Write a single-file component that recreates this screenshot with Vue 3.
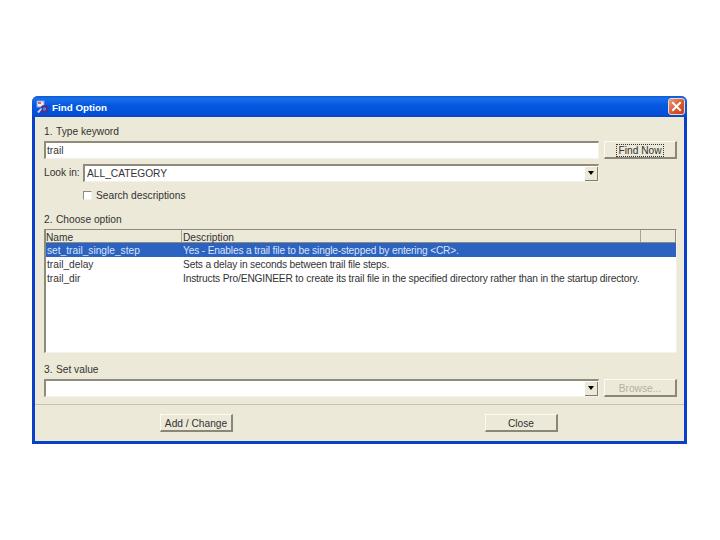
<script setup>
const rows = [
  { name: 'set_trail_single_step', desc: 'Yes - Enables a trail file to be single-stepped by entering <CR>.', selected: true },
  { name: 'trail_delay', desc: 'Sets a delay in seconds between trail file steps.', selected: false },
  { name: 'trail_dir', desc: 'Instructs Pro/ENGINEER to create its trail file in the specified directory rather than in the startup directory.', selected: false }
]
</script>

<template>
  <div class="page">
    <div class="window">
      <div class="titlebar">
        <svg class="app-icon" width="14" height="14" viewBox="0 0 14 14">
          <rect x="1" y="1" width="7" height="6" fill="#e8eef8" stroke="#8aa0d0" stroke-width="1" />
          <rect x="2" y="2" width="3" height="2" fill="#d06080" />
          <circle cx="8.5" cy="9" r="4" fill="#5a2a90" />
          <circle cx="8.5" cy="9" r="1.8" fill="#2f9ac8" />
          <path d="M1 12 L5 8 L6 9 L3 13 Z" fill="#c8d8f0" />
        </svg>
        <span class="title">Find Option</span>
        <div class="close-x">
          <svg width="11" height="11" viewBox="0 0 11 11">
            <path d="M2 2 L9 9 M9 2 L2 9" stroke="#fff" stroke-width="2" stroke-linecap="square" />
          </svg>
        </div>
      </div>
      <div class="client">
        <div class="label first"><span class="num">1.</span>Type keyword</div>
        <div class="row keyword-row">
          <div class="field grow"><span class="pad">trail</span></div>
          <button class="btn side"><span class="focus-box">Find Now</span></button>
        </div>
        <div class="row look-row">
          <span class="look-label">Look in:</span>
          <div class="field combo look-combo">
            <span class="pad">ALL_CATEGORY</span>
            <span class="arrow"><i></i></span>
          </div>
        </div>
        <div class="check-row">
          <span class="check"></span>
          <span>Search descriptions</span>
        </div>
        <div class="label second"><span class="num">2.</span>Choose option</div>
        <div class="list">
          <div class="list-head">
            <span class="col-name head-cell">Name</span>
            <span class="col-desc head-cell">Description</span>
            <span class="col-tail head-cell"></span>
          </div>
          <div v-for="r in rows" :key="r.name" class="list-row" :class="{ selected: r.selected }">
            <span class="col-name cell">{{ r.name }}</span>
            <span class="cell-desc">{{ r.desc }}</span>
          </div>
        </div>
        <div class="label third"><span class="num">3.</span>Set value</div>
        <div class="row value-row">
          <div class="field combo grow">
            <span class="pad"></span>
            <span class="arrow"><i></i></span>
          </div>
          <button class="btn side disabled">Browse...</button>
        </div>
      </div>
      <div class="footer">
        <button class="btn foot">Add / Change</button>
        <button class="btn foot">Close</button>
      </div>
    </div>
  </div>
</template>

<style scoped>
.page {
  width: 720px;
  height: 540px;
  background: #fff;
  padding: 96px 0 0 32px;
  box-sizing: border-box;
  font-family: "Liberation Sans", Arial, sans-serif;
  font-size: 10.2px;
  color: #333;
}
.window {
  width: 655px;
  height: 348px;
  box-sizing: border-box;
  background: #ece9d8;
  border: solid #0a3fc8;
  border-width: 0 3px 3px;
  border-radius: 6px 6px 0 0;
  display: flex;
  flex-direction: column;
}
.titlebar {
  height: 21px;
  margin: 0 -3px;
  flex: none;
  border-radius: 6px 6px 0 0;
  background: linear-gradient(#0a5ad8 0, #1a6ee8 12%, #0558e0 45%, #0450d8 85%, #0a46c0 100%);
  display: flex;
  align-items: center;
  padding: 0 2px 0 4px;
}
.app-icon { flex: none; }
.title {
  margin-left: 2px;
  padding-top: 2px;
  color: #fff;
  font-weight: bold;
  font-size: 9.8px;
}
.close-x {
  margin-left: auto;
  width: 15px;
  height: 15px;
  border: 1px solid #f0d8d0;
  border-radius: 3px;
  background: linear-gradient(135deg, #e8a080, #d8582c 55%, #c84018);
  display: flex;
  align-items: center;
  justify-content: center;
}
.client {
  flex: 1;
  min-height: 0;
  padding: 0 7px 0 9px;
  display: flex;
  flex-direction: column;
}
.label { height: 13px; line-height: 13px; }
.num { display: inline-block; width: 12px; }
.first { margin-top: 8px; }
.second { margin-top: 11px; }
.third { margin-top: 10px; }
.row { display: flex; align-items: flex-start; }
.keyword-row { margin-top: 3px; gap: 5px; }
.look-row { margin-top: 5px; }
.value-row { margin-top: 3px; gap: 5px; }
.grow { flex: 1; }
.field {
  height: 18px;
  box-sizing: border-box;
  background: #fff;
  border-top: 2px solid #8e8b7c;
  border-left: 2px solid #8e8b7c;
  border-right: 1px solid #f4f2e8;
  border-bottom: 1px solid #f4f2e8;
  display: flex;
  align-items: center;
}
.pad { padding-left: 1px; line-height: 14px; }
.look-label { width: 39px; line-height: 18px; }
.look-combo { width: 516px; padding-left: 1px; }
.combo { justify-content: space-between; }
.arrow {
  width: 13px;
  height: 14px;
  background: #ece9d8;
  border-right: 1px solid #807c6c;
  border-bottom: 1px solid #807c6c;
  box-sizing: border-box;
  display: flex;
  align-items: center;
  justify-content: center;
}
.arrow i {
  width: 0;
  height: 0;
  border: 3px solid transparent;
  border-top: 4px solid #000;
  border-bottom: 0;
}
.btn {
  font: inherit;
  color: #333;
  background: #ece9d8;
  border-top: 1px solid #fbfaf4;
  border-left: 1px solid #fbfaf4;
  border-right: 2px solid #8a8778;
  border-bottom: 2px solid #8a8778;
  padding: 1px 0 0;
  box-sizing: border-box;
  display: flex;
  align-items: center;
  justify-content: center;
}
.side { width: 73px; height: 18px; flex: none; }
.focus-box { border: 1px dotted #333; padding: 0 1px; line-height: 11px; }
.disabled { color: #b4b1a2; }
.check-row {
  margin-top: 7px;
  margin-left: 39px;
  height: 13px;
  display: flex;
  align-items: center;
  gap: 4px;
}
.check {
  width: 9px;
  height: 9px;
  box-sizing: border-box;
  background: #fff;
  border-top: 1px solid #8e8b7c;
  border-left: 1px solid #8e8b7c;
  border-right: 1px solid #f4f2e8;
  border-bottom: 1px solid #f4f2e8;
}
.list {
  margin-top: 3px;
  height: 124px;
  box-sizing: border-box;
  background: #fff;
  border-top: 1px solid #8e8b7c;
  border-left: 2px solid #8e8b7c;
  border-right: 1px solid #f4f2e8;
  border-bottom: 1px solid #f4f2e8;
}
.list-head {
  display: flex;
  height: 13px;
  box-sizing: border-box;
  background: #ece9d8;
  border-bottom: 1px solid #8e8b7c;
  line-height: 15px;
}
.head-cell { box-sizing: border-box; border-right: 1px solid #a8a598; }
.col-name { width: 136px; flex: none; }
.col-desc { flex: 1; padding-left: 1px; }
.col-tail { width: 35px; flex: none; border-right: 1px solid #8e8b7c; }
.list-row { display: flex; height: 14px; line-height: 15px; }
.cell { padding-left: 1px; }
.cell-desc { white-space: nowrap; letter-spacing: -0.16px; }
.selected { background: #2c62c0; color: #d8e4f8; }
.footer {
  height: 37px;
  box-sizing: border-box;
  flex: none;
  border-top: 1px solid #c4c1b0;
  display: flex;
  align-items: flex-start;
  padding: 9px 0 0 125px;
  gap: 252px;
}
.foot { width: 73px; height: 18px; }
</style>
